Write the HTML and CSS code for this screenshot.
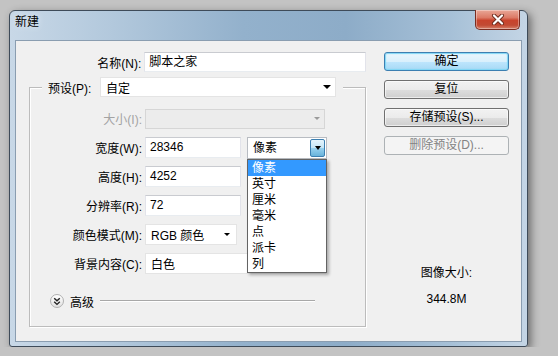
FILE: index.html
```html
<!DOCTYPE html>
<html lang="zh-CN">
<head>
    <meta charset="UTF-8">
    <title>新建</title>
    <link rel="stylesheet" href="styles.css">
</head>
<body>
    <div class="window">
        <div class="titlebar">
            <span class="title">新建</span>
            <div class="close">
                <svg width="14" height="11" viewBox="0 0 14 11">
                    <path d="M3 1.5 L11 9.5 M11 1.5 L3 9.5" stroke="#6b2a1c" stroke-width="4" stroke-linecap="round"/>
                    <path d="M3 1.5 L11 9.5 M11 1.5 L3 9.5" stroke="#fff" stroke-width="2.2" stroke-linecap="round"/>
                </svg>
            </div>
        </div>
        <div class="client">
            <div class="form">
                <div class="name-row">
                    <label class="name-lbl">名称(N):</label>
                    <div class="textbox name-box">脚本之家</div>
                </div>

                <div class="group">
                    <div class="preset">
                        <label>预设(P):</label>
                        <div class="select preset-select">自定<span class="arrow"></span></div>
                    </div>

                    <div class="rows">
                        <div class="row">
                            <label class="lbl disabled">大小(I):</label>
                            <div class="select size-select"><span></span><span class="arrow grey"></span></div>
                        </div>
                        <div class="row">
                            <label class="lbl">宽度(W):</label>
                            <div class="textbox num-box">28346</div>
                            <div class="unit">
                                <div class="unit-select">
                                    <span>像素</span>
                                    <span class="unit-btn"><span class="arrow"></span></span>
                                </div>
                                <!-- 열린 드롭다운 -->
                                <div class="unit-list">
                                    <div class="item sel">像素</div>
                                    <div class="item">英寸</div>
                                    <div class="item">厘米</div>
                                    <div class="item">毫米</div>
                                    <div class="item">点</div>
                                    <div class="item">派卡</div>
                                    <div class="item">列</div>
                                </div>
                            </div>
                        </div>
                        <div class="row">
                            <label class="lbl">高度(H):</label>
                            <div class="textbox num-box">4252</div>
                        </div>
                        <div class="row">
                            <label class="lbl">分辨率(R):</label>
                            <div class="textbox num-box">72</div>
                        </div>
                        <div class="row">
                            <label class="lbl">颜色模式(M):</label>
                            <div class="select mode-select">RGB 颜色<span class="arrow small"></span></div>
                        </div>
                        <div class="row">
                            <label class="lbl">背景内容(C):</label>
                            <div class="select bg-select">白色<span class="arrow"></span></div>
                        </div>
                    </div>

                    <div class="advanced">
                        <span class="adv-icon">
                            <svg width="8" height="9" viewBox="0 0 8 9">
                                <path d="M1.2 1.2 L4 3.8 L6.8 1.2 M1.2 4.8 L4 7.4 L6.8 4.8" fill="none" stroke="#222" stroke-width="1.4"/>
                            </svg>
                        </span>
                        <span class="adv-text">高级</span>
                        <span class="adv-line"></span>
                    </div>
                </div>
            </div>

            <div class="side">
                <div class="buttons">
                    <div class="btn default">确定</div>
                    <div class="btn">复位</div>
                    <div class="btn">存储预设(S)...</div>
                    <div class="btn disabled">删除预设(D)...</div>
                </div>
                <div class="imgsize">
                    <div>图像大小:</div>
                    <div>344.8M</div>
                </div>
            </div>
        </div>
    </div>
</body>
</html>
```

FILE: styles.css
```css
body {
    margin: 0;
    background-color: #c3c3c3;
    font-family: "Liberation Sans", "Noto Sans CJK SC", sans-serif;
    font-size: 12px;
    color: #000;
}
.window {
    box-sizing: border-box;
    width: 519px;
    height: 337px;
    margin: 10px 0 0 9px;
    border: 1px solid #3e4b59;
    border-radius: 6px 6px 3px 3px;
    background: linear-gradient(to right, #c8d8e7 0%, #b2c8dc 20%, #93b1cc 45%, #8dacc8 65%, #a6c0d7 85%, #c4d5e5 100%);
    box-shadow: 3px 3px 8px rgba(0, 0, 0, 0.45);
    display: flex;
    flex-direction: column;
}
.titlebar {
    height: 29px;
    display: flex;
    justify-content: space-between;
    align-items: flex-start;
    padding-left: 5px;
}
.title {
    line-height: 22px;
    text-shadow: 0 0 6px #e8f0f8;
}
.close {
    width: 45px;
    height: 20px;
    box-sizing: border-box;
    margin: -1px 7px 0 0;
    border: 1px solid #7a2d21;
    border-top: none;
    border-radius: 0 0 5px 5px;
    background: linear-gradient(#e9a797 0%, #dc7a66 40%, #c8432c 55%, #c24a33 80%, #d6826c 100%);
    box-shadow: inset 0 0 0 1px rgba(255, 255, 255, 0.35);
    display: flex;
    justify-content: center;
    align-items: center;
}
.client {
    flex: 1;
    margin: 0 5px 4px;
    border: 1px solid #8a9db0;
    background-color: #f0f0f0;
    display: flex;
}
.form {
    width: 350px;
    padding-top: 11px;
}
.name-row {
    display: flex;
    align-items: center;
    height: 20px;
}
.name-lbl {
    width: 126px;
    margin-right: 3px;
    text-align: right;
}
.textbox {
    box-sizing: border-box;
    height: 21px;
    line-height: 19px;
    padding-left: 4px;
    background-color: #fff;
    border: 1px solid;
    border-color: #c9cbd0 #e2e3ea #e8ecf0 #e2e3ea;
}
.name-box {
    width: 223px;
    height: 20px;
}
.num-box {
    width: 96px;
}
.group {
    box-sizing: border-box;
    width: 337px;
    height: 240px;
    margin: 15px 0 0 13px;
    border: 1px solid #bcbcbc;
    box-shadow: 1px 1px 0 #fff, inset 1px 1px 0 #fff;
}
.preset {
    display: flex;
    align-items: center;
    width: fit-content;
    height: 20px;
    margin: -11px 0 0 12px;
    padding: 0 7px 0 6px;
    background-color: #f0f0f0;
}
.preset label {
    width: 50px;
    margin-right: 2px;
}
.select {
    box-sizing: border-box;
    height: 21px;
    padding: 0 4px 0 5px;
    background-color: #fff;
    border: 1px solid #e4e4e4;
    display: flex;
    justify-content: space-between;
    align-items: center;
}
.preset-select {
    width: 236px;
    height: 20px;
}
.size-select {
    width: 180px;
    height: 20px;
    background-color: #ececec;
    border-color: #d6d6d6;
}
.mode-select {
    width: 92px;
    padding-right: 6px;
}
.bg-select {
    width: 181px;
}
.arrow {
    width: 0;
    height: 0;
    border-left: 4px solid transparent;
    border-right: 4px solid transparent;
    border-top: 4px solid #000;
}
.arrow.small {
    border-left-width: 3px;
    border-right-width: 3px;
    border-top-width: 3px;
}
.arrow.grey {
    border-top-color: #9a9a9a;
    border-left-width: 3px;
    border-right-width: 3px;
    border-top-width: 3px;
}
.rows {
    display: flex;
    flex-direction: column;
    gap: 8px;
    margin-top: 11px;
}
.row {
    display: flex;
    align-items: center;
    height: 21px;
}
.lbl {
    width: 112px;
    margin-right: 3px;
    text-align: right;
}
.lbl.disabled {
    color: #a3a3a3;
}
.unit {
    position: relative;
    width: 80px;
    margin-left: 6px;
}
.unit-select {
    box-sizing: border-box;
    height: 22px;
    padding: 1px 1px 1px 5px;
    background-color: #fff;
    border: 1px solid #b8bcc2;
    display: flex;
    justify-content: space-between;
    align-items: stretch;
}
.unit-select span:first-child {
    line-height: 19px;
}
.unit-btn {
    width: 15px;
    box-sizing: border-box;
    border: 1px solid #3c7fb1;
    border-radius: 2px;
    background: linear-gradient(#e5f4fc, #c4e5f6 50%, #98d1ef 51%, #68b3db);
    display: flex;
    justify-content: center;
    align-items: center;
}
.unit-btn .arrow {
    border-left-width: 3px;
    border-right-width: 3px;
    border-top-width: 4px;
}
.unit-list {
    position: absolute;
    top: 22px;
    left: 0;
    z-index: 2;
    box-sizing: border-box;
    width: 80px;
    background-color: #fff;
    border: 1px solid #646464;
    box-shadow: 2px 2px 3px rgba(0, 0, 0, 0.3);
}
.item {
    height: 16px;
    line-height: 16px;
    padding-left: 4px;
}
.item.sel {
    background-color: #3399ff;
    color: #fff;
}
.advanced {
    display: flex;
    align-items: center;
    height: 16px;
    margin: 19px 0 0 20px;
}
.adv-icon {
    box-sizing: border-box;
    width: 14px;
    height: 14px;
    border: 1px solid #b0b0b0;
    border-radius: 50%;
    background: linear-gradient(#ffffff, #e2e2e2);
    display: flex;
    justify-content: center;
    align-items: center;
}
.adv-text {
    margin-left: 6px;
}
.adv-line {
    width: 215px;
    height: 1px;
    margin-left: 6px;
    background-color: #a8a8a8;
    border-bottom: 1px solid #fff;
}
.side {
    width: 125px;
    margin-left: 18px;
    padding-top: 11px;
}
.buttons {
    display: flex;
    flex-direction: column;
    gap: 9px;
}
.btn {
    box-sizing: border-box;
    height: 19px;
    line-height: 17px;
    text-align: center;
    border: 1px solid #707070;
    border-radius: 3px;
    background: linear-gradient(#f2f2f2, #ebebeb 50%, #dddddd 51%, #cfcfcf);
    box-shadow: inset 0 0 0 1px rgba(255, 255, 255, 0.6);
}
.btn.default {
    border-color: #3c7fb1;
    background: linear-gradient(#eaf6fd, #d9f0fc 50%, #bee6fd 51%, #a7d9f5);
    box-shadow: inset 0 0 1px 1px #7fd6f5;
}
.btn.disabled {
    border-color: #adb2b5;
    background: #f4f4f4;
    color: #838383;
    box-shadow: none;
}
.imgsize {
    margin-top: 110px;
    text-align: center;
    line-height: 16px;
    display: flex;
    flex-direction: column;
    gap: 10px;
}
```
